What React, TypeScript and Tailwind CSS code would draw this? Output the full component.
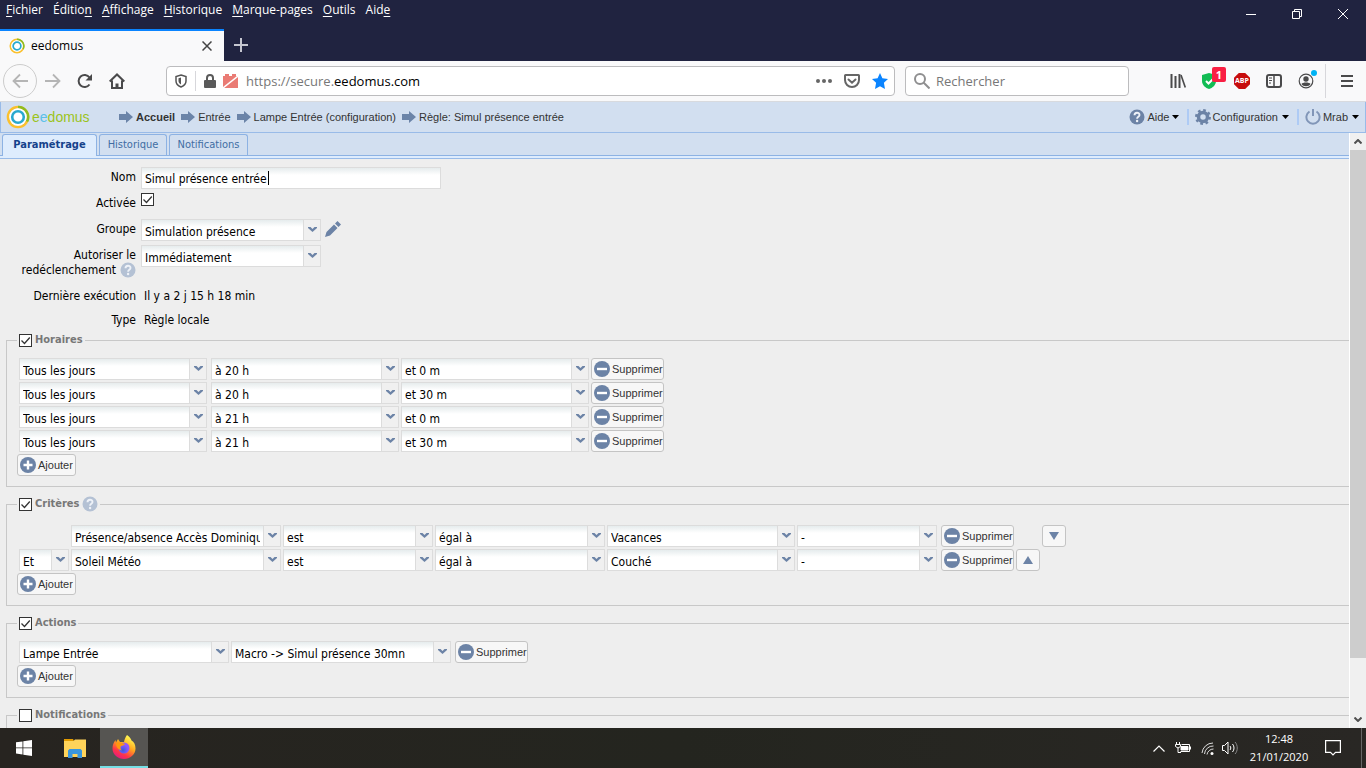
import type { ReactNode } from "react";
import type { JSX } from "react/jsx-runtime";

type Line = { width: string; value: string };

const menus: [string, string, string][] = [
  ["", "F", "ichier"],
  ["Éditio", "n", ""],
  ["", "A", "ffichage"],
  ["", "H", "istorique"],
  ["", "M", "arque-pages"],
  ["", "O", "utils"],
  ["Aid", "e", ""],
];

const schedules: Line[][] = [
  ["à 20 h", "et 0 m"],
  ["à 20 h", "et 30 m"],
  ["à 21 h", "et 0 m"],
  ["à 21 h", "et 30 m"],
].map(([hour, minute]) => [
  { width: "w-[188px]", value: "Tous les jours" },
  { width: "w-[188px]", value: hour },
  { width: "w-[188px]", value: minute },
]);

const criteria = [
  { link: "", device: "Présence/absence Accès Dominique", value: "Vacances" },
  { link: "Et", device: "Soleil Météo", value: "Couché" },
];

function Logo({ size }: { size: string }): JSX.Element {
  return (
    <svg className={`shrink-0 ${size}`} viewBox="0 0 24 24" fill="none">
      <circle cx="12" cy="12" r="10" stroke="#fbc02d" strokeWidth="2.600" />
      <path d="M12 2a10 10 0 0 1 9 14.500" stroke="#8fbc21" strokeWidth="2.600" />
      <circle cx="12" cy="12" r="8.700" fill="#fff" />
      <circle cx="12" cy="12" r="5.800" stroke="#29a9cf" strokeWidth="2.600" />
    </svg>
  );
}

function RoundIcon({ kind }: { kind: "plus" | "minus" }): JSX.Element {
  return (
    <svg className="size-4 shrink-0" viewBox="0 0 16 16">
      <circle cx="8" cy="8" r="8" fill="#6c83a6" />
      <path
        d={kind === "plus" ? "M8 3.500v9M3.500 8h9" : "M3 8h10"}
        stroke="#fff"
        strokeWidth="2.400"
      />
    </svg>
  );
}

function HelpIcon({ color }: { color: string }): JSX.Element {
  return (
    <svg className={`size-4 shrink-0 ${color}`} viewBox="0 0 16 16">
      <circle cx="8" cy="8" r="7.500" fill="currentColor" />
      <path
        d="M5.500 6.300c0-3.400 5-3.200 5-.300 0 1.800-2.400 1.800-2.400 3.700"
        fill="none"
        stroke="#eef2f8"
        strokeWidth="1.900"
      />
      <circle cx="8.100" cy="12" r="1.200" fill="#eef2f8" />
    </svg>
  );
}

function Arrow(): JSX.Element {
  return (
    <svg className="h-3 w-[14px] shrink-0" viewBox="0 0 14 12" fill="#6b84a8">
      <path d="M0 3h7V0l7 6-7 6V9H0z" />
    </svg>
  );
}

function Caret(): JSX.Element {
  return (
    <svg className="h-1 w-[7px] shrink-0" viewBox="0 0 7 4">
      <path d="M0 0h7L3.500 4z" fill="#000" />
    </svg>
  );
}

function Select({ label, width, value }: Line & { label: string }): JSX.Element {
  return (
    <span className={`relative block h-[22px] shrink-0 ${width}`}>
      <select
        aria-label={label}
        defaultValue={value}
        className="block size-full appearance-none border border-[#dcdcdc] bg-white bg-linear-to-b from-[#e6eced] to-white to-35% pt-1 pr-5 pl-[3px] text-black outline-none"
      >
        <option>{value}</option>
      </select>
      <span className="pointer-events-none absolute top-px right-px flex h-5 w-[17px] justify-center border-l border-[#dcdcdc] bg-[#f0f0f0] pt-1.5">
        <svg className="h-[7px] w-[9px]" viewBox="0 0 9 7" fill="#6c83a6">
          <path d="M0 1h2.500l2 2 2-2H9v1L4.500 6 0 2z" />
        </svg>
      </span>
    </span>
  );
}

function Checkbox({ id, checked }: { id: string; checked: boolean }): JSX.Element {
  return (
    <span className="relative block size-[13px] shrink-0">
      <input
        id={id}
        type="checkbox"
        defaultChecked={checked}
        className="peer block size-full appearance-none border border-[#333] bg-white"
      />
      <svg
        className="pointer-events-none absolute inset-0 hidden peer-checked:block"
        viewBox="0 0 13 13"
        fill="none"
        stroke="#333"
        strokeWidth="1.300"
      >
        <path d="M2.500 6.500l3 3 5.300-6" />
      </svg>
    </span>
  );
}

function SmallButton({ kind }: { kind: "plus" | "minus" }): JSX.Element {
  const width = kind === "plus" ? "w-[59px]" : "w-[73px]";
  return (
    <button
      type="button"
      className={`flex h-[22px] shrink-0 items-center gap-0.5 rounded-[3px] border border-[#c4c4c4] bg-[#f7f7f7] pl-0.5 font-['Liberation_Sans',sans-serif] text-[11px] text-[#333] ${width}`}
    >
      <RoundIcon kind={kind} />
      {kind === "plus" ? "Ajouter" : "Supprimer"}
    </button>
  );
}

function MoveButton({ up }: { up: boolean }): JSX.Element {
  return (
    <button
      type="button"
      aria-label={up ? "Monter" : "Descendre"}
      className="flex h-[22px] w-6 shrink-0 items-center justify-center rounded-[3px] border border-[#c4c4c4] bg-[#f7f7f7]"
    >
      <svg className="h-2 w-[10px]" viewBox="0 0 10 8" fill="#6c83a6">
        <path d={up ? "M5 0l5 8H0z" : "M0 0h10L5 8z"} />
      </svg>
    </button>
  );
}

type SectionProps = {
  id: string;
  title: string;
  checked?: boolean;
  help?: boolean;
  children?: ReactNode;
};

function Section({ id, title, checked = true, help, children }: SectionProps): JSX.Element {
  return (
    <fieldset className="ml-1.5 border border-r-0 border-[#c8c8c8] pb-[10px] pl-3">
      <legend className="-ml-0.5 flex h-4 items-center gap-[3px] px-0.5 text-[11px] font-bold text-[#777]">
        <Checkbox id={id} checked={checked} />
        <label htmlFor={id}>{title}</label>
        {help && <HelpIcon color="text-[#b4c1d4]" />}
      </legend>
      {children}
    </fieldset>
  );
}

function Add(): JSX.Element {
  return (
    <div className="-ml-0.5 flex">
      <SmallButton kind="plus" />
    </div>
  );
}

function TitleBar(): JSX.Element {
  return (
    <header className="shrink-0 bg-[#202340] text-white">
      <div className="flex h-[29px] justify-between">
        <nav className="flex gap-[10px] pl-1.5 text-xs leading-5">
          {menus.map(([before, key, after]) => (
            <button key={before + key} className="h-5">
              {before}
              <u className="underline-offset-2">{key}</u>
              {after}
            </button>
          ))}
        </nav>
        <div className="flex">
          {[
            ["Réduire", "M0 5.500h10"],
            ["Restaurer", "M.5 2.500h7v7h-7zM2.500 2.500v-2h7v7h-2"],
            ["Fermer", "M0 0l10 10M10 0L0 10"],
          ].map(([label, d]) => (
            <button key={label} aria-label={label} className="flex h-7 w-[46px] items-center justify-center">
              <svg className="size-[10px]" viewBox="0 0 10 10" fill="none" stroke="#fff">
                <path d={d} />
              </svg>
            </button>
          ))}
        </div>
      </div>
      <div className="flex h-8">
        <div className="flex w-56 items-center border-t-2 border-[#0a84ff] bg-[#f9f9fa] pr-3 pl-[9px] text-xs text-black">
          <Logo size="size-4" />
          <span className="ml-1.5 grow">eedomus</span>
          <button aria-label="Fermer l'onglet">
            <svg className="size-[10px]" viewBox="0 0 10 10" stroke="#444" strokeWidth="1.500">
              <path d="M.5.5l9 9M9.500.5l-9 9" />
            </svg>
          </button>
        </div>
        <button aria-label="Nouvel onglet" className="flex items-center px-[10px]">
          <svg className="size-[14px]" viewBox="0 0 14 14" stroke="#c5c6d0" strokeWidth="2">
            <path d="M7 0v14M0 7h14" />
          </svg>
        </button>
      </div>
    </header>
  );
}

function Toolbar(): JSX.Element {
  return (
    <div className="flex h-[41px] shrink-0 items-center border-b border-[#d8dade] bg-[#f9f9fa] pl-[3px]">
      <button
        aria-label="Précédent"
        className="flex size-[34px] items-center justify-center rounded-full border border-[#ccc]"
      >
        <svg className="size-4" viewBox="0 0 16 16" fill="none" stroke="#b5b5b5" strokeWidth="1.800">
          <path d="M16 8H1.500M8 1.500L1.500 8 8 14.500" />
        </svg>
      </button>
      <button aria-label="Suivant" className="ml-2">
        <svg className="size-4" viewBox="0 0 16 16" fill="none" stroke="#b5b5b5" strokeWidth="1.800">
          <path d="M0 8h14.500M8 1.500L14.500 8 8 14.500" />
        </svg>
      </button>
      <button aria-label="Actualiser" className="ml-4">
        <svg className="size-4" viewBox="0 0 16 16" fill="none" stroke="#4a4a4b" strokeWidth="2">
          <path d="M12.500 11.500A6 6 0 1 1 12.500 4.500" />
          <path d="M15 1v6.500H8.500z" fill="#4a4a4b" stroke="none" />
        </svg>
      </button>
      <button aria-label="Accueil" className="ml-4">
        <svg className="size-4" viewBox="0 0 16 16" fill="none" stroke="#4a4a4b" strokeWidth="2">
          <path d="M.7 8.500L8 1.500l7.300 7M3 7.500V15h10V7.500" />
          <path d="M8 15v-4.500" strokeWidth="3" />
        </svg>
      </button>
      <div className="ml-[41px] flex h-[30px] grow items-center rounded-sm border border-[#bcbcbe] bg-white">
        <svg className="ml-2 h-[14px] w-3" viewBox="0 0 12 14">
          <path d="M6 1l5 1.500V7c0 3-2.500 5-5 6-2.500-1-5-3-5-6V2.500z" fill="none" stroke="#555" strokeWidth="1.500" />
          <path d="M6 3.500v7C4.500 9.500 3.500 8.500 3.500 7V4.200z" fill="#555" />
        </svg>
        <span className="ml-2 h-5 w-px bg-[#d7d7db]" />
        <svg className="ml-2 h-[14px] w-3" viewBox="0 0 12 14">
          <path d="M3 7V4a3 3 0 0 1 6 0v3" fill="none" stroke="#5a5a5a" strokeWidth="2" />
          <rect y="6" width="12" height="8" rx="1" fill="#5a5a5a" />
        </svg>
        <svg className="ml-[7px] h-[14px] w-[15px]" viewBox="0 0 15 14">
          <path d="M0 2h2V0h4v2h3V0h4v2h2v12H0z" fill="#ea7b74" />
          <path d="M0 14L15 2" stroke="#fff" strokeWidth="1.500" />
        </svg>
        <div className="ml-2 grow pt-0.5 text-[13px] text-[#777]">
          https://secure.<span className="text-black">eedomus.com</span>
        </div>
        <button aria-label="Actions de page">
          <svg className="size-4" viewBox="0 0 16 16" fill="#666">
            <circle cx="2" cy="8" r="2" />
            <circle cx="8" cy="8" r="2" />
            <circle cx="14" cy="8" r="2" />
          </svg>
        </button>
        <button aria-label="Pocket" className="ml-3">
          <svg className="size-4" viewBox="0 0 16 16" fill="none" stroke="#666" strokeWidth="2">
            <path d="M1.500 2h13c.3 0 .5.200.5.500V7A7 7 0 0 1 1 7V2.500c0-.3.200-.5.500-.5z" />
            <path d="M4.500 6.500L8 9.700l3.500-3.200" strokeLinecap="round" />
          </svg>
        </button>
        <button aria-label="Marque-page" className="mr-1.5 ml-3">
          <svg className="size-4" viewBox="0 0 16 16" fill="#0a84ff">
            <path d="M8 0l2.400 5.200 5.600.7-4.100 3.900L13 16l-5-2.700L3 16l1.100-6.200L0 5.900l5.600-.7z" />
          </svg>
        </button>
      </div>
      <label className="ml-[10px] flex h-[30px] w-56 items-center rounded-sm border border-[#bcbcbe] bg-white pl-2">
        <svg className="size-4 shrink-0" viewBox="0 0 16 16" fill="none" stroke="#8f8f90" strokeWidth="2">
          <circle cx="6" cy="6" r="5" />
          <path d="M9.500 9.500l6 6" />
        </svg>
        <input
          aria-label="Rechercher"
          placeholder="Rechercher"
          className="ml-1.5 w-full min-w-0 bg-transparent pt-0.5 text-[13px] outline-none placeholder:text-[#777]"
        />
      </label>
      <div className="ml-[41px] flex items-center gap-4">
        <button aria-label="Bibliothèque">
          <svg className="size-4" viewBox="0 0 16 16" stroke="#4a4a4b" strokeWidth="2">
            <path d="M1.500 1v14M5.500 3v12M9.500 1v14" />
            <path d="M11 2l4.300 12.500" strokeWidth="1.600" />
          </svg>
        </button>
        <button aria-label="Protection" className="relative">
          <svg className="size-4" viewBox="0 0 16 16">
            <path d="M7 0l7 2v6c0 4-3.500 7-7 8-3.500-1-7-4-7-8V2z" fill="#12bc54" />
            <path d="M4 8l2.500 2.500L11 6" fill="none" stroke="#fff" strokeWidth="2" />
          </svg>
          <span className="absolute -top-1.5 left-[10px] h-[15px] w-[14px] rounded-[2px] bg-[#f91f43] text-center text-[11px] leading-[15px] font-bold text-white">
            1
          </span>
        </button>
        <button
          aria-label="Adblock Plus"
          className="flex size-4 items-center justify-center bg-[#c70d0d] text-[7px] leading-4 font-bold text-white [clip-path:polygon(30%_0,70%_0,100%_30%,100%_70%,70%_100%,30%_100%,0_70%,0_30%)]"
        >
          ABP
        </button>
        <button aria-label="Panneaux latéraux">
          <svg className="size-4" viewBox="0 0 16 16" fill="none" stroke="#4a4a4b">
            <rect x="1" y="2" width="14" height="12" rx="2" strokeWidth="2" />
            <path d="M8 2v12" strokeWidth="1.500" />
            <path d="M3 5h3M3 7.500h3M3 10h2" />
          </svg>
        </button>
        <button aria-label="Compte" className="relative">
          <svg className="size-4" viewBox="0 0 16 16" fill="#4a4a4b">
            <circle cx="8" cy="8" r="6.800" fill="none" stroke="#4a4a4b" strokeWidth="1.200" />
            <circle cx="8" cy="6" r="2.700" />
            <path d="M3.500 11c1-2 8-2 9 0-1.500 3-7.500 3-9 0z" />
          </svg>
          <span className="absolute -top-[3px] left-[13px] size-1.5 rounded-full bg-[#00b3f4]" />
        </button>
      </div>
      <span className="ml-[11px] h-[34px] w-px bg-[#d7d7db]" />
      <button aria-label="Menu" className="mr-[13px] ml-[15px]">
        <svg className="h-3 w-3" viewBox="0 0 12 12" stroke="#4a4a4b" strokeWidth="2">
          <path d="M0 1h12M0 6h12M0 11h12" />
        </svg>
      </button>
    </div>
  );
}

function AppHeader(): JSX.Element {
  return (
    <div className="flex h-[31px] shrink-0 items-center justify-between border-x border-b border-[#99bbe8] bg-[#d2dff0] font-['Liberation_Sans',sans-serif] text-[11px] text-[#333]">
      <div className="flex items-center">
        <a href="#" className="flex w-[118px] items-center gap-0.5 pl-[5px] text-sm text-[#9bc31c]">
          <Logo size="size-6" />
          <span>
            e<span className="text-[#5bc0e8]">e</span>domus
          </span>
        </a>
        <nav className="flex gap-1.5">
          {["Accueil", "Entrée", "Lampe Entrée (configuration)", "Règle: Simul présence entrée"].map((crumb) => (
            <a key={crumb} href="#" className="flex items-center gap-[3px] first:font-bold">
              <Arrow />
              {crumb}
            </a>
          ))}
        </nav>
      </div>
      <div className="flex items-center">
        <button className="flex items-center gap-0.5 pr-2">
          <HelpIcon color="text-[#6c83a6]" />
          Aide
          <Caret />
        </button>
        <button className="flex items-center gap-0.5 border-l-2 border-[#aecbf5] px-1.5">
          <svg className="size-4 shrink-0" viewBox="0 0 16 16" fill="none" stroke="#6c83a6">
            <circle cx="8" cy="8" r="4.500" strokeWidth="3.500" />
            <circle cx="8" cy="8" r="6.700" strokeWidth="2.600" strokeDasharray="2.630 2.630" />
          </svg>
          <span className="mr-0.5">Configuration</span>
          <Caret />
        </button>
        <button className="ml-0.5 flex items-center gap-0.5 border-l-2 border-[#aecbf5] px-1.5">
          <svg className="size-4 shrink-0" viewBox="0 0 16 16" fill="none" stroke="#8196b8" strokeWidth="2">
            <path d="M4.500 2.500a6.600 6.600 0 1 0 7 0M8 0v7" />
          </svg>
          <span className="mr-0.5">Mrab</span>
          <Caret />
        </button>
      </div>
    </div>
  );
}

function Tabs(): JSX.Element {
  return (
    <div className="flex h-[26px] flex-col border-b border-[#99bbe8] bg-[#deecfd]">
      <div className="flex h-[23px] gap-0.5 border-b border-[#8db2e3] bg-[#d2dff0] pt-px pl-0.5 text-[11px] text-[#416da3]">
        <button className="-mb-px h-[22px] w-[95px] rounded-t-[3px] border border-b-0 border-[#8db2e3] bg-[#deecfd] font-bold text-[#15428b]">
          Paramétrage
        </button>
        <button className="w-[68px] rounded-t-[3px] border border-b-0 border-[#8db2e3]">Historique</button>
        <button className="w-[79px] rounded-t-[3px] border border-b-0 border-[#8db2e3]">Notifications</button>
      </div>
    </div>
  );
}

function RuleForm(): JSX.Element {
  return (
    <form className="text-xs leading-[14px] text-black">
      <div className="grid grid-cols-[136px_1fr] gap-x-[5px] pt-2">
        <label htmlFor="nom" className="pt-[3px] text-right">
          Nom
        </label>
        <div className="relative h-[26px]">
          <input
            id="nom"
            defaultValue="Simul présence entrée"
            className="block h-[22px] w-[300px] border border-[#dcdcdc] bg-white bg-linear-to-b from-[#e6eced] to-white to-35% px-[3px] pt-0.5 outline-none"
          />
          <span className="absolute top-1 left-[127px] h-[14px] w-px bg-black" />
        </div>
        <label htmlFor="activee" className="pt-[3px] text-right">
          Activée
        </label>
        <div className="h-[26px]">
          <Checkbox id="activee" checked />
        </div>
        <span className="pt-[3px] text-right">Groupe</span>
        <div className="flex h-[26px] gap-1">
          <Select label="Groupe" width="w-[180px]" value="Simulation présence" />
          <button type="button" aria-label="Modifier le groupe" className="h-5">
            <svg className="size-4" viewBox="0 0 16 16" fill="#6c83a6">
              <path d="M0 16l1.500-5 7.500-7.500L12.500 7 5 14.500zM10 2.500L12.500 0 16 3.500 13.500 6z" />
            </svg>
          </button>
        </div>
        <div className="pt-[3px] text-right">
          Autoriser le
          <span className="flex items-center justify-end gap-1">
            redéclenchement <HelpIcon color="text-[#b4c1d4]" />
          </span>
        </div>
        <div className="h-10">
          <Select label="Autoriser le redéclenchement" width="w-[180px]" value="Immédiatement" />
        </div>
        <span className="h-6 pt-1 text-right">Dernière exécution</span>
        <span className="h-6 pt-1 pl-[3px]">Il y a 2 j 15 h 18 min</span>
        <span className="h-[23px] pt-1 text-right">Type</span>
        <span className="h-[23px] pt-1 pl-[3px]">Règle locale</span>
      </div>

      <div className="flex flex-col gap-[9px]">
        <Section id="horaires" title="Horaires">
          <div className="flex flex-col gap-0.5 pt-[10px]">
            {schedules.map((row, i) => (
              <div key={i} className="flex">
                {row.map((line, j) => (
                  <span key={j} className="mr-0.5 first:mr-1">
                    <Select label={`Horaire ${i + 1}`} {...line} />
                  </span>
                ))}
                <SmallButton kind="minus" />
              </div>
            ))}
            <Add />
          </div>
        </Section>

        <Section id="criteres" title="Critères" help>
          <div className="flex flex-col gap-0.5 pt-[13px]">
            {criteria.map(({ link, device, value }) => (
              <div key={device} className="flex gap-0.5">
                {link ? (
                  <Select label="Opérateur" width="w-[50px]" value={link} />
                ) : (
                  <span className="w-[50px] shrink-0" />
                )}
                <Select label="Périphérique" width="w-[210px]" value={device} />
                <Select label="Verbe" width="w-[150px]" value="est" />
                <Select label="Comparaison" width="w-[170px]" value="égal à" />
                <Select label="Valeur" width="w-[188px]" value={value} />
                <Select label="Durée" width="w-[140px]" value="-" />
                <span className="ml-0.5">
                  <SmallButton kind="minus" />
                </span>
                {!link && <span className="w-6" />}
                <MoveButton up={link !== ""} />
              </div>
            ))}
            <Add />
          </div>
        </Section>

        <Section id="actions" title="Actions">
          <div className="flex flex-col gap-0.5 pt-[10px]">
            <div className="flex gap-0.5">
              <Select label="Périphérique" width="w-[210px]" value="Lampe Entrée" />
              <Select label="Action" width="w-[220px]" value="Macro -> Simul présence 30mn" />
              <span className="ml-0.5">
                <SmallButton kind="minus" />
              </span>
            </div>
            <Add />
          </div>
        </Section>

        <Section id="notifications" title="Notifications" checked={false} />
      </div>
    </form>
  );
}

function ScrollBar(): JSX.Element {
  return (
    <div className="flex w-[17px] shrink-0 flex-col border-l border-white bg-[#f0f0f0]">
      <button aria-label="Défiler vers le haut" className="flex h-[17px] items-center justify-center">
        <svg className="h-[5px] w-2" viewBox="0 0 8 5" fill="none" stroke="#505050" strokeWidth="2">
          <path d="M.5 4.500L4 1l3.500 3.500" />
        </svg>
      </button>
      <div className="shrink grow-[508] basis-0 bg-[#cdcdcd]" />
      <div className="grow-[53] basis-0" />
      <button aria-label="Défiler vers le bas" className="flex h-[17px] items-center justify-center">
        <svg className="h-[5px] w-2" viewBox="0 0 8 5" fill="none" stroke="#505050" strokeWidth="2">
          <path d="M.5.5L4 4 7.500.5" />
        </svg>
      </button>
    </div>
  );
}

function TaskBar(): JSX.Element {
  return (
    <footer className="flex h-10 shrink-0 justify-between bg-linear-to-r from-[#272420] via-[#24251f] via-50% to-[#292724] text-white">
      <div className="flex">
        <button aria-label="Démarrer" className="flex w-[50px] items-center pl-4">
          <svg className="size-4" viewBox="0 0 16 16" fill="#fff">
            <path d="M0 2.300l6.500-.9v6.100H0zM7.300 1.300L16 0v7.500H7.300zM0 8.300h6.500v6.200L0 13.600zM7.300 8.300H16V16l-8.700-1.300z" />
          </svg>
        </button>
        <button aria-label="Explorateur de fichiers" className="flex w-[50px] items-center justify-center">
          <svg className="h-5 w-[22px]" viewBox="0 0 22 20">
            <path d="M0 1h9l1 2H0z" fill="#e39b00" />
            <path d="M0 3h9.500l1.500-1.500h11V19H0z" fill="#ffd35a" />
            <path d="M4 20v-7.500L5.500 11h11l1.500 1.500V20h-4.500v-4h-5v4z" fill="#3a96dd" />
          </svg>
        </button>
        <button
          aria-label="Firefox"
          className="flex w-12 items-center justify-center border-b-2 border-[#76e0e6] bg-[#565552]"
        >
          <svg className="size-6" viewBox="0 0 24 24">
            <defs>
              <linearGradient id="fox" x1="0.800" y1="0" x2="0.250" y2="1">
                <stop offset="0.100" stopColor="#fff44f" />
                <stop offset="0.450" stopColor="#ffa51e" />
                <stop offset="0.750" stopColor="#ff3647" />
                <stop offset="1" stopColor="#e31587" />
              </linearGradient>
              <radialGradient id="globe" cx="0.400" cy="0.700">
                <stop offset="0" stopColor="#3d5bdc" />
                <stop offset="1" stopColor="#9059ff" />
              </radialGradient>
            </defs>
            <path
              d="M15 0c3 2 4 4 4.500 5.500C22 7 23.500 9.500 23.500 13.500 23.500 19.500 18 24 12 24S.5 19.500.5 13.500c0-3.500 1-6 3-8.500l.5 2.500L6 4l2 3h4c.5-3 1.500-5 3-7z"
              fill="url(#fox)"
            />
            <circle cx="12" cy="13" r="5.500" fill="url(#globe)" />
            <path
              d="M4 8.500c2-1.500 4-1.500 5.500-.5l3.500.8c-.5 1.700-2.500 1.700-4 2.200-1 1-.5 3 .5 4.500-3.500-1-5.500-3.500-5.500-7z"
              fill="#ff980e"
            />
          </svg>
        </button>
      </div>
      <div className="flex items-center">
        <svg className="h-[7px] w-3" viewBox="0 0 12 7" fill="none" stroke="#fff" strokeWidth="1.200">
          <path d="M.5 6.500L6 1l5.500 5.500" />
        </svg>
        <svg className="ml-[10px] h-3 w-4" viewBox="0 0 16 12" fill="none" stroke="#fff">
          <path d="M1.500 0v2M4.500 0v2M.5 2.500h5v2L3 6 .5 4.500zM3 6v4.500h3" />
          <path d="M6.500 2.500h8v7h-9M15.500 4.500v3" />
          <path d="M6 4.500h7v3.500H6z" fill="#fff" />
        </svg>
        <svg className="ml-[10px] size-[13px]" viewBox="0 0 13 13" fill="none" stroke="#ddd">
          <path d="M1 11A11 11 0 0 1 12 1M3.500 12A8.500 8.500 0 0 1 12.500 4M6 12.500A6.500 6.500 0 0 1 12.500 7" />
          <circle cx="11" cy="11.500" r="1.500" fill="#fff" stroke="none" />
        </svg>
        <svg className="ml-2 h-[14px] w-[17px]" viewBox="0 0 17 14" fill="none" stroke="#fff">
          <path d="M.5 4.500h2L6 1v12L2.500 9.500h-2zM8 5c1 1 1 3 0 4M10.500 3c2 2 2 6 0 8" />
          <path d="M13 1c3 3 3 9 0 12" stroke="#888" />
        </svg>
        <div className="ml-[10px] w-[60px] text-center text-[11px] leading-[18px]">
          <div>12:48</div>
          <div>21/01/2020</div>
        </div>
        <button aria-label="Notifications" className="ml-4">
          <svg className="size-4" viewBox="0 0 16 16" fill="none" stroke="#fff" strokeWidth="1.200">
            <path d="M.6.600h14.800v11.800h-4.900L8 15l-2.500-2.600H.6z" />
          </svg>
        </button>
        <span className="mr-1 ml-5 h-full w-px bg-[#666]" />
      </div>
    </footer>
  );
}

export default function App(): JSX.Element {
  return (
    <div className="flex h-screen flex-col overflow-hidden bg-[#eee] font-['Open_Sans',sans-serif]">
      <TitleBar />
      <Toolbar />
      <AppHeader />
      <div className="flex min-h-0 grow basis-0 font-['DejaVu_Sans_Condensed','DejaVu_Sans',sans-serif]">
        <main className="min-w-0 grow overflow-hidden">
          <Tabs />
          <RuleForm />
        </main>
        <ScrollBar />
      </div>
      <TaskBar />
    </div>
  );
}
